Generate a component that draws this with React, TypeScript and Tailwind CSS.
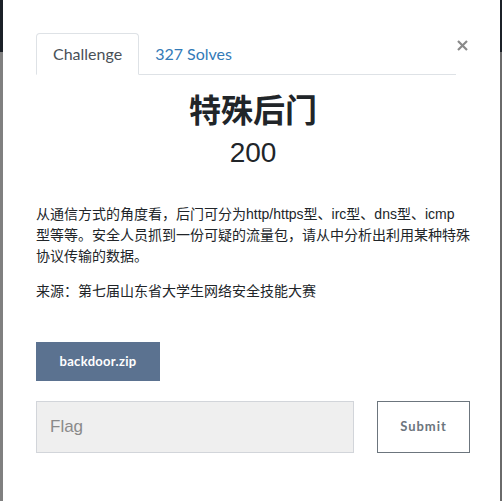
import React from "react";

export default function App() {
  return (
    <div className="flex w-[502px] h-[501px] overflow-hidden bg-white">
      <div className="flex flex-col w-[3px] shrink-0">
        <div className="h-[52px] bg-[#1b2027]" />
        <div className="flex-1 bg-[#808080]" />
      </div>
      <div className="flex-1 flex flex-col pl-[33px] pt-[33px] bg-white">
        <div className="flex items-start">
          <ul className="flex w-[420px] border-b border-[#dee2e6] font-['Lato',sans-serif] text-[16px]">
            <li className="h-[42px] -mb-px px-[16px] flex items-center border border-[#dee2e6] border-b-white rounded-t-[4px] text-[#495057] bg-white">
              Challenge
            </li>
            <li className="h-[41px] px-[16px] flex items-center text-[#337ab7]">
              327 Solves
            </li>
          </ul>
          <svg width="11" height="11" viewBox="0 0 11 11" className="ml-[1px] mt-[7px]">
            <path d="M1 1 L10 10 M10 1 L1 10" stroke="#8a8a8a" strokeWidth="2.2" strokeLinecap="butt" />
          </svg>
        </div>
        <div className="w-[434px] flex flex-col">
          <h2 className="mt-[16px] text-center text-[32px] leading-[38px] font-bold text-[#212529] font-['Lato','Noto_Sans_CJK_SC',sans-serif]">
            特殊后门
          </h2>
          <h3 className="mt-[7px] text-center text-[28px] leading-[34px] text-[#212529] font-['Liberation_Sans','Noto_Sans_CJK_SC',sans-serif]">
            200
          </h3>
          <div className="mt-[34px] text-[14px] leading-[21px] text-[#212529] font-['Liberation_Sans','Noto_Sans_CJK_SC',sans-serif]">
            <p className="whitespace-nowrap">
              从通信方式的角度看，后门可分为http/https型、irc型、dns型、icmp
              <br />
              型等等。安全人员抓到一份可疑的流量包，请从中分析出利用某种特殊
              <br />
              协议传输的数据。
            </p>
            <p className="mt-[14px]">来源：第七届山东省大学生网络安全技能大赛</p>
          </div>
          <div className="mt-[40px]">
            <button className="w-[124px] h-[39px] bg-[#5b7290] text-white text-[13px] font-bold font-['Lato',sans-serif] tracking-[0.3px]">
              backdoor.zip
            </button>
          </div>
          <div className="mt-[20px] flex">
            <div className="w-[318px] h-[52px] bg-[#efefef] border border-[#d2d5da] flex items-center pl-[13px] text-[17px] text-[#8a8a8a] font-['Liberation_Sans',sans-serif]">
              Flag
            </div>
            <button className="ml-[23px] w-[93px] h-[52px] bg-white border border-[#6c757d] text-[#6c757d] text-[13px] font-bold tracking-[1px] font-['Lato',sans-serif]">
              Submit
            </button>
          </div>
        </div>
      </div>
      <div className="flex flex-col w-[2px] shrink-0">
        <div className="h-[52px] bg-[#1b2027]" />
        <div className="flex-1 bg-[#6a6a6a]" />
      </div>
    </div>
  );
}
